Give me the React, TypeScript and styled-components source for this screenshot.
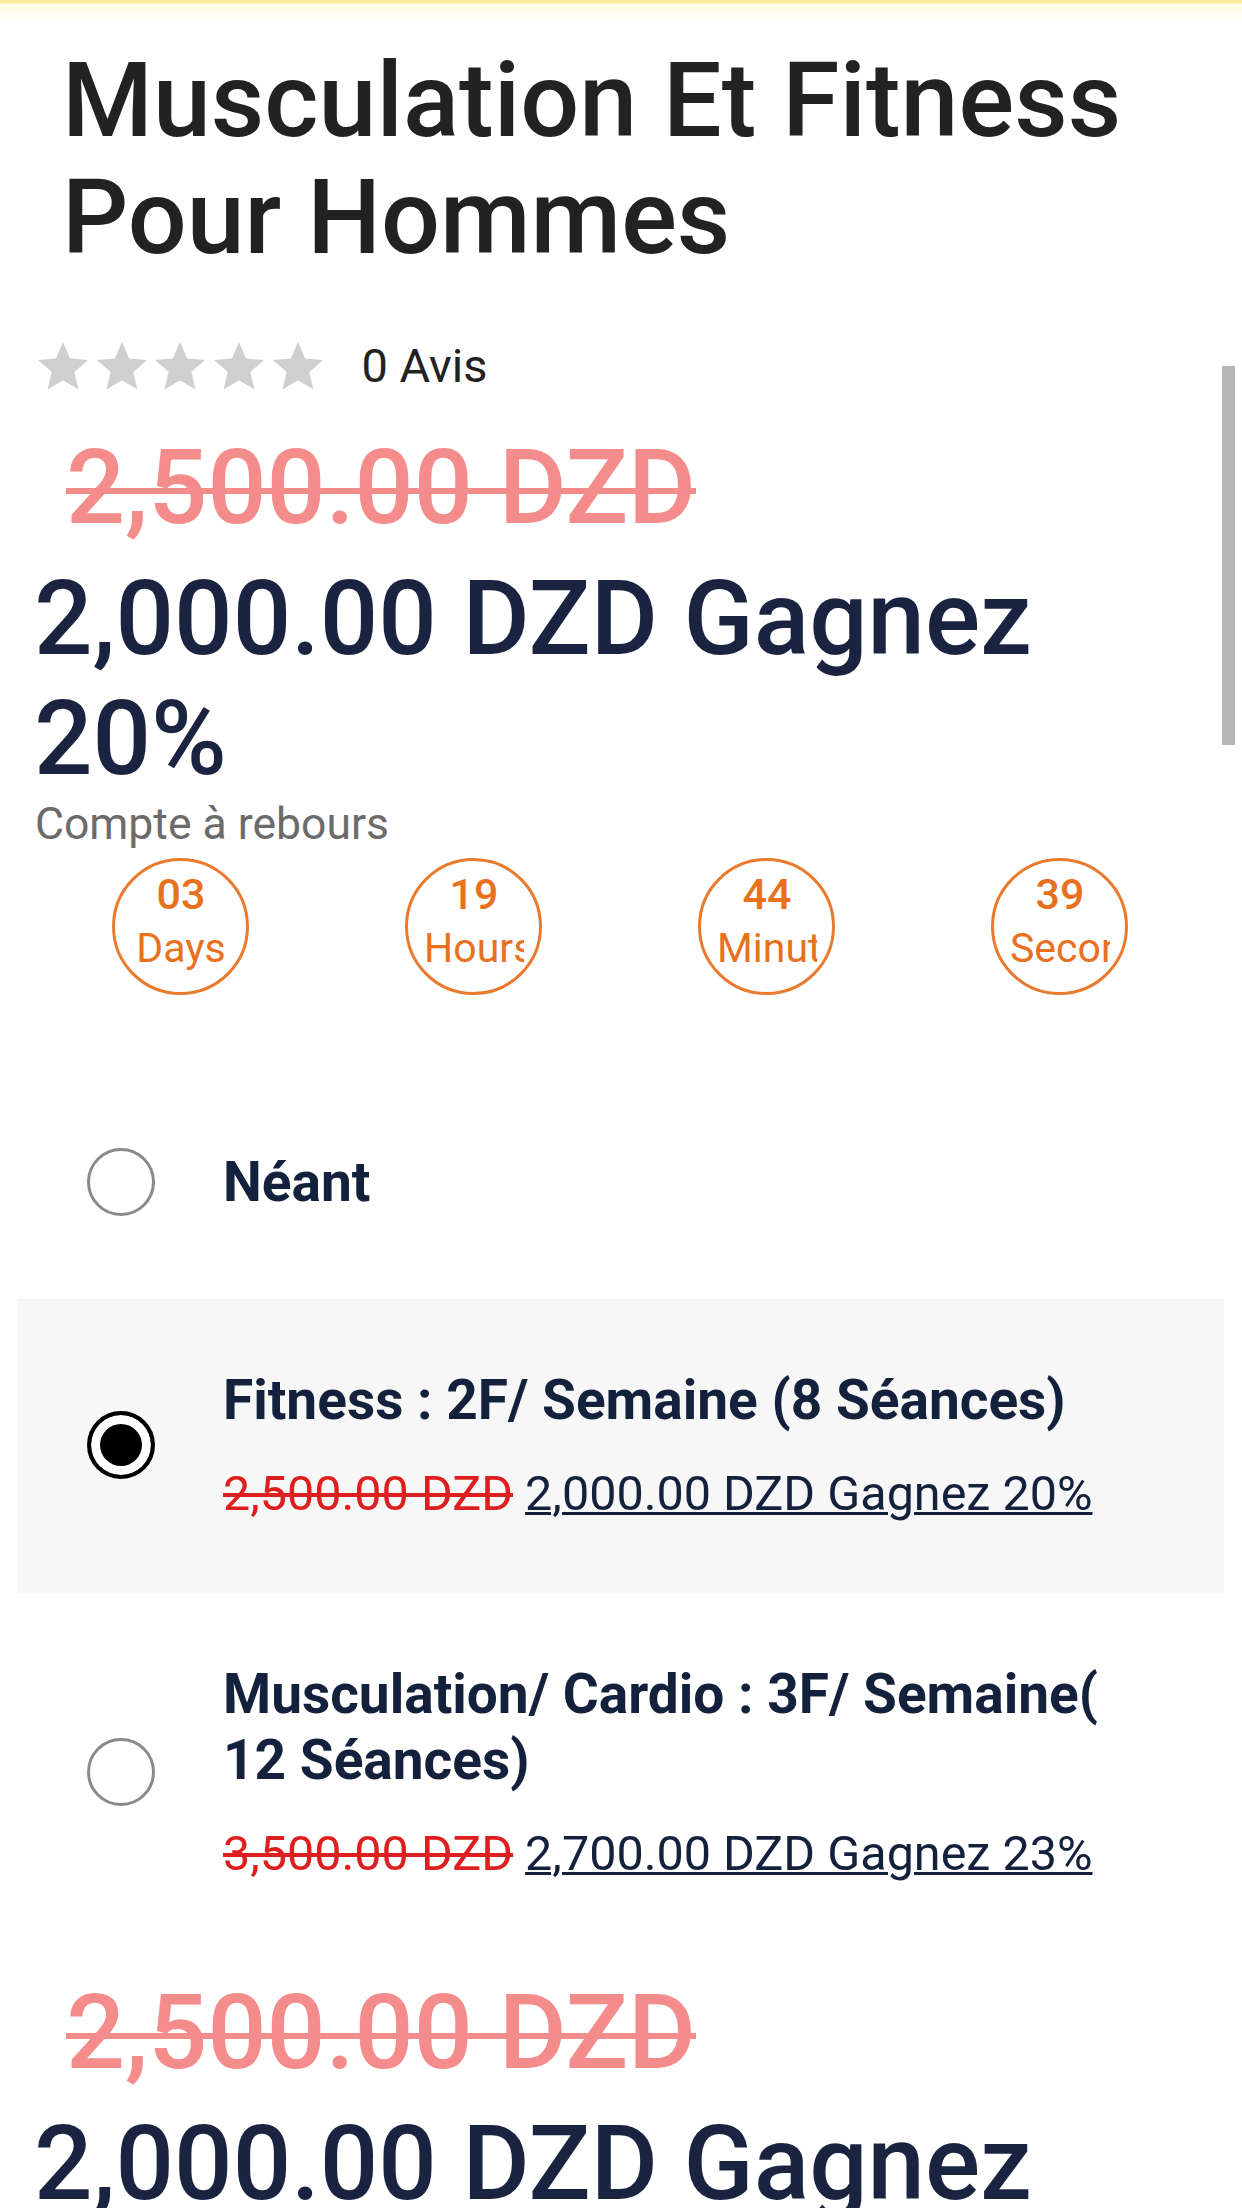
import React from 'react';
import styled, { createGlobalStyle } from 'styled-components';

const GlobalStyle = createGlobalStyle`
  html, body {
    margin: 0;
    padding: 0;
    background: #fff;
  }
  body {
    font-family: Roboto, "Noto Sans", "Liberation Sans", Arial, sans-serif;
    -webkit-font-smoothing: antialiased;
  }
  * {
    box-sizing: border-box;
  }
`;

const Page = styled.main`
  position: relative;
  width: 1242px;
  min-height: 2208px;
  overflow: hidden;
  padding-top: 42px;
`;

const TopGlow = styled.div`
  position: absolute;
  top: 0;
  left: 0;
  right: 0;
  height: 22px;
  background: linear-gradient(#fbeaa2 0, #fbeaa2 3px, rgba(255, 248, 205, 0.6) 4px, rgba(255, 255, 255, 0) 22px);
  pointer-events: none;
`;

const ScrollThumb = styled.div`
  position: absolute;
  top: 366px;
  right: 7px;
  width: 13px;
  height: 379px;
  background: #b5b5b5;
`;

const Title = styled.h1`
  margin: 0;
  padding: 0 40px 0 62px;
  font-size: 104px;
  line-height: 117px;
  font-weight: 500;
  color: #222;
`;

const RatingRow = styled.div`
  display: flex;
  align-items: center;
  height: 60px;
  margin-top: 60px;
  padding-left: 38px;
  gap: 8.7px;
`;

const Star = styled.svg`
  width: 50px;
  height: 47.5px;
  fill: #cfcfcf;
`;

const ReviewCount = styled.span`
  margin-left: 30px;
  font-size: 47px;
  line-height: 60px;
  color: #222;
`;

const OldPrice = styled.div<{ $gap: number }>`
  margin-top: ${(p) => p.$gap}px;
  padding-left: 66px;
  font-size: 104px;
  line-height: 120px;
  font-weight: 500;
  color: #f48c8c;
  text-decoration: line-through;
  text-decoration-thickness: 6px;
`;

const NewPrice = styled.div`
  margin-top: 11px;
  padding: 0 36px 0 34px;
  font-size: 103px;
  line-height: 120px;
  font-weight: 500;
  color: #1a2340;
`;

const CountdownLabel = styled.div`
  padding-left: 35px;
  font-size: 44.5px;
  line-height: 50px;
  color: #6b6b6b;
`;

const CountdownRow = styled.div`
  display: grid;
  grid-template-columns: repeat(4, 1fr);
  margin-top: 9px;
  padding: 0 36px 0 34px;
`;

const Dial = styled.div`
  justify-self: center;
  width: 137px;
  height: 137px;
  border: 3px solid #e97a2e;
  border-radius: 50%;
  padding: 6px 15px 0 16px;
  color: #e8711f;
  text-align: center;
`;

const DialValue = styled.div`
  font-size: 43px;
  line-height: 54px;
  font-weight: 500;
`;

const DialUnit = styled.div`
  font-size: 41px;
  line-height: 54px;
  white-space: nowrap;
  overflow: hidden;
`;

const OptionList = styled.div`
  margin: 85px 18px 0 17px;
`;

const Option = styled.label<{ $selected?: boolean }>`
  display: flex;
  align-items: center;
  gap: 68px;
  padding: 68px 88px 71px 70px;
  background: ${(p) => (p.$selected ? '#f7f7f7' : 'transparent')};

  &:first-child {
    margin-bottom: 12px;
  }
`;

const Radio = styled.span<{ $checked?: boolean }>`
  flex: none;
  width: 68px;
  height: 68px;
  border-radius: 50%;
  border: ${(p) => (p.$checked ? '4px solid #000' : '3px solid #8a8a8a')};
  background: ${(p) => (p.$checked ? '#000' : '#fff')};
  box-shadow: ${(p) => (p.$checked ? 'inset 0 0 0 9px #fff' : 'none')};
`;

const OptionBody = styled.div`
  flex: 1;
  min-width: 0;
`;

const OptionName = styled.div`
  font-size: 55px;
  line-height: 66px;
  font-weight: 700;
  color: #14213d;
`;

const OptionPrice = styled.div`
  margin-top: 33px;
  font-size: 48.5px;
  line-height: 56px;
  white-space: nowrap;
`;

const Was = styled.del`
  color: #dd1f1f;
`;

const Now = styled.span`
  color: #14213d;
  text-decoration: underline;
  text-decoration-thickness: 3px;
`;

const StarIcon = () => (
  <Star viewBox="2 2 20 19">
    <path d="M12 17.27L18.18 21l-1.64-7.03L22 9.24l-7.19-.61L12 2 9.19 8.63 2 9.24l5.46 4.73L5.82 21z" />
  </Star>
);

const countdown = [
  { value: '03', unit: 'Days' },
  { value: '19', unit: 'Hours' },
  { value: '44', unit: 'Minutes' },
  { value: '39', unit: 'Seconds' },
];

type Plan = {
  name: string;
  was?: string;
  now?: string;
  selected?: boolean;
};

const plans: Plan[] = [
  { name: 'Néant' },
  {
    name: 'Fitness : 2F/ Semaine (8 Séances)',
    was: '2,500.00 DZD',
    now: '2,000.00 DZD Gagnez 20%',
    selected: true,
  },
  {
    name: 'Musculation/ Cardio : 3F/ Semaine( 12 Séances)',
    was: '3,500.00 DZD',
    now: '2,700.00 DZD Gagnez 23%',
  },
];

export default function App() {
  return (
    <>
      <GlobalStyle />
      <Page>
        <TopGlow />
        <Title>Musculation Et Fitness Pour Hommes</Title>

        <RatingRow>
          {[0, 1, 2, 3, 4].map((i) => (
            <StarIcon key={i} />
          ))}
          <ReviewCount>0 Avis</ReviewCount>
        </RatingRow>

        <OldPrice $gap={32}>2,500.00 DZD</OldPrice>
        <NewPrice>2,000.00 DZD Gagnez 20%</NewPrice>

        <CountdownLabel>Compte à rebours</CountdownLabel>
        <CountdownRow>
          {countdown.map((c) => (
            <Dial key={c.unit}>
              <DialValue>{c.value}</DialValue>
              <DialUnit>{c.unit}</DialUnit>
            </Dial>
          ))}
        </CountdownRow>

        <OptionList>
          {plans.map((plan) => (
            <Option key={plan.name} $selected={plan.selected}>
              <Radio $checked={plan.selected} />
              <OptionBody>
                <OptionName>{plan.name}</OptionName>
                {plan.was ? (
                  <OptionPrice>
                    <Was>{plan.was}</Was> <Now>{plan.now}</Now>
                  </OptionPrice>
                ) : null}
              </OptionBody>
            </Option>
          ))}
        </OptionList>

        <OldPrice $gap={20}>2,500.00 DZD</OldPrice>
        <NewPrice>2,000.00 DZD Gagnez 20%</NewPrice>

        <ScrollThumb />
      </Page>
    </>
  );
}
